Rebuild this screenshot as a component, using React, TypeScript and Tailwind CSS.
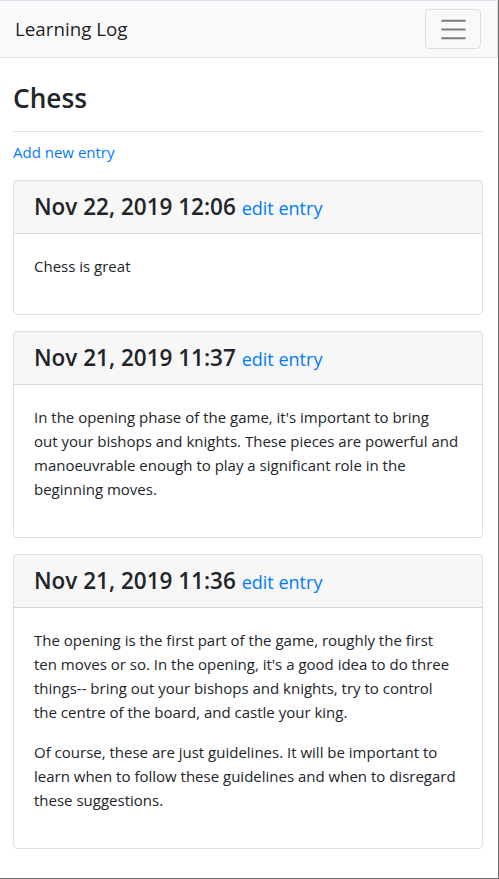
import React from 'react'

// line breaks follow the reference wrap
const entries = [
  {
    date: 'Nov 22, 2019 12:06',
    paras: [['Chess is great']],
  },
  {
    date: 'Nov 21, 2019 11:37',
    paras: [
      [
        "In the opening phase of the game, it's important to bring",
        'out your bishops and knights. These pieces are powerful and',
        'manoeuvrable enough to play a significant role in the',
        'beginning moves.',
      ],
    ],
  },
  {
    date: 'Nov 21, 2019 11:36',
    paras: [
      [
        'The opening is the first part of the game, roughly the first',
        "ten moves or so. In the opening, it's a good idea to do three",
        'things-- bring out your bishops and knights, try to control',
        'the centre of the board, and castle your king.',
      ],
      [
        'Of course, these are just guidelines. It will be important to',
        'learn when to follow these guidelines and when to disregard',
        'these suggestions.',
      ],
    ],
  },
]

function Toggler() {
  return (
    <button className="flex h-10 w-14 items-center justify-center rounded border border-black/10">
      <svg width="33" height="33" viewBox="0 0 30 30">
        <path d="M4 7h22M4 15h22M4 23h22" stroke="rgba(0,0,0,0.5)" strokeWidth="1.85" strokeMiterlimit="10" />
      </svg>
    </button>
  )
}

export default function App() {
  return (
    <div
      className="h-[879px] w-[499px] overflow-hidden border-b border-r border-[#6b6b6b] bg-white text-[15px] leading-6 text-[#212529]"
      style={{ fontFamily: "'Segoe UI', 'Open Sans', 'Noto Sans', sans-serif" }}
    >
      <nav className="flex h-[58px] items-center justify-between border-b border-r border-t border-[#dee2e6] bg-[#f8f9fa] pl-[15px] pr-4">
        <a className="text-[18.75px] leading-[30px] text-black/90">Learning Log</a>
        <Toggler />
      </nav>

      <main className="pl-[13px] pr-[15px] pt-6">
        <div className="mb-2 border-b border-[#dee2e6] pb-2">
          <h3 className="mb-2 text-[26.25px] font-semibold leading-[33px]">Chess</h3>
        </div>
        <p className="mb-4">
          <a className="text-[#007bff]">Add new entry</a>
        </p>

        {entries.map((e) => (
          <div key={e.date + e.paras.length} className="mb-4 rounded border border-black/[0.125]">
            <h4 className="border-b border-black/[0.125] bg-black/[0.03] px-5 py-3 text-[22.5px] font-semibold leading-7">
              {e.date}{' '}
              <small className="text-[18px] font-normal leading-none">
                <a className="text-[#007bff]">edit entry</a>
              </small>
            </h4>
            <div className="p-5">
              {e.paras.map((lines, i) => (
                <p key={i} className="mb-4 whitespace-nowrap">
                  {lines.map((l, j) => (
                    <React.Fragment key={j}>
                      {j > 0 && <br />}
                      {l}
                    </React.Fragment>
                  ))}
                </p>
              ))}
            </div>
          </div>
        ))}
      </main>
    </div>
  )
}
